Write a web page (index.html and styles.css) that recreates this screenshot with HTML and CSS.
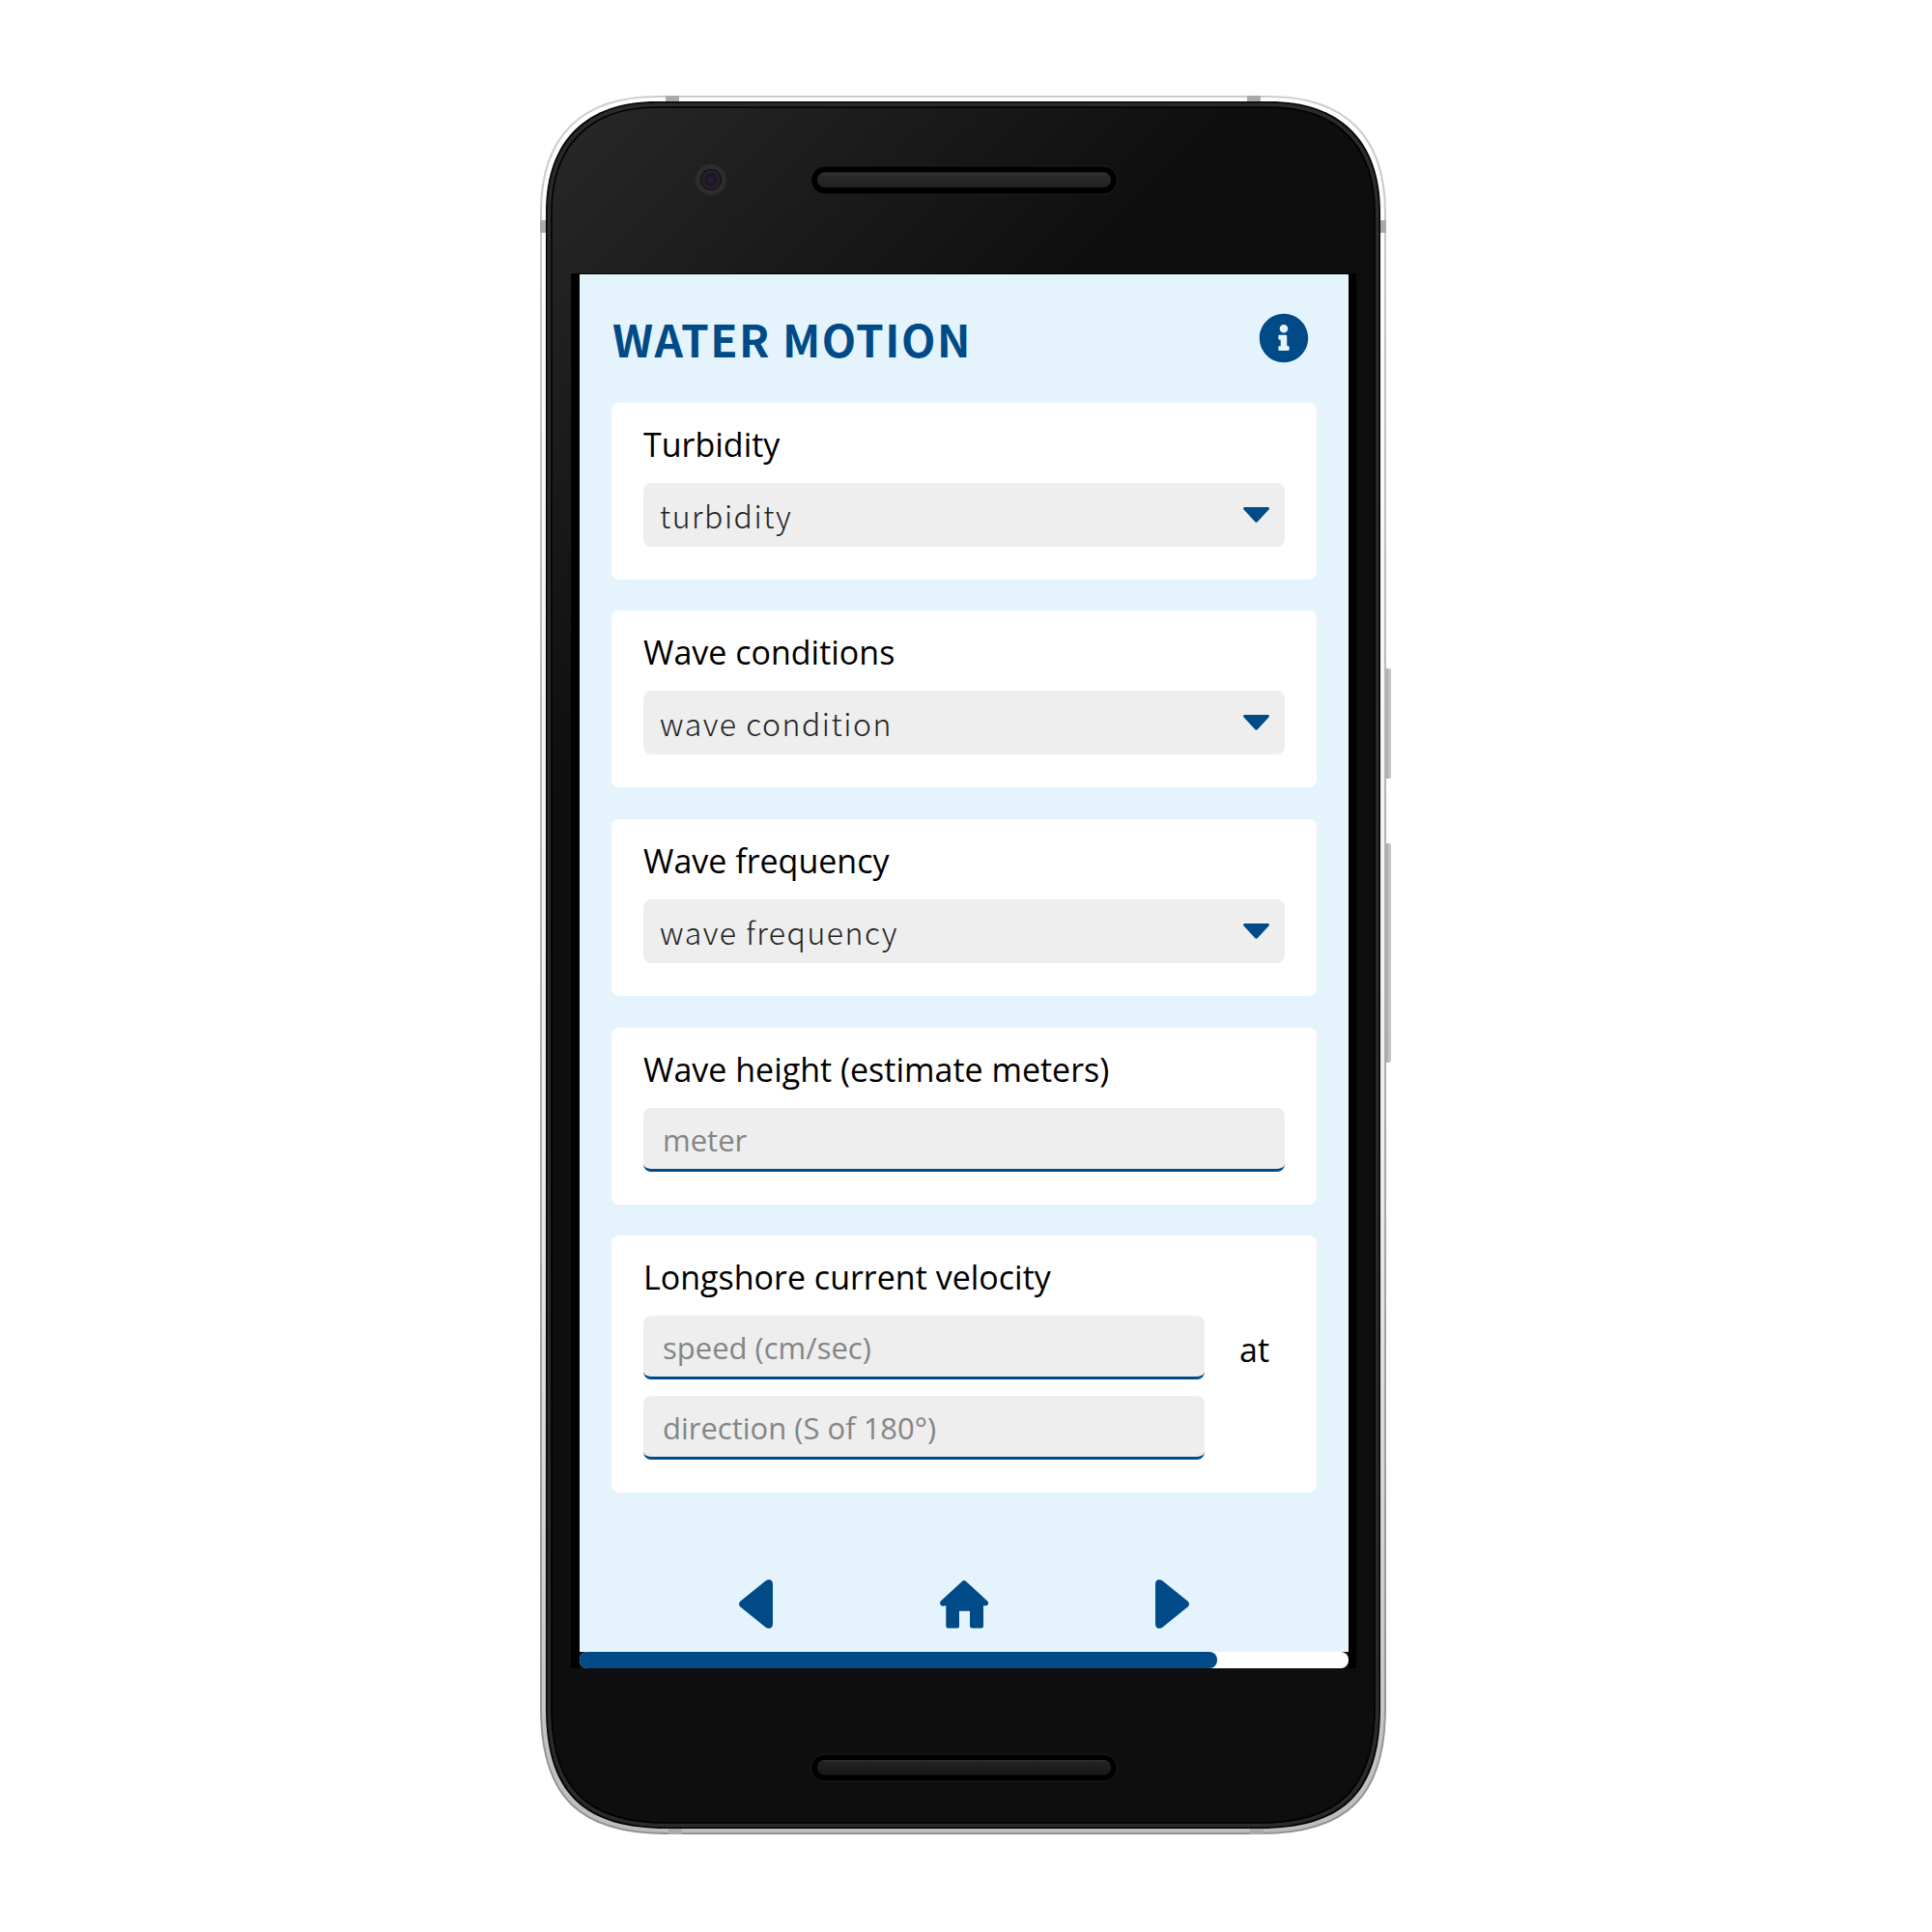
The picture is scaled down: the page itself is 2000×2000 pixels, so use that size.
FILE: index.html
```html
<!DOCTYPE html>
<html lang="en">
<head>
<meta charset="utf-8">
<title>Water Motion</title>
<link rel="stylesheet" href="styles.css">
</head>
<body>
<main class="stage">
<svg class="device" viewBox="0 0 2000 2000" aria-hidden="true">
  <defs>
    <linearGradient id="rim" x1="0" y1="0" x2="0" y2="1"><stop offset="0" stop-color="#fff"/><stop offset=".6" stop-color="#eee"/><stop offset="1" stop-color="#bdbdbd"/></linearGradient>
    <linearGradient id="edge" x1="0" y1="0" x2="0" y2="1"><stop offset="0" stop-color="#cdcdcd"/><stop offset="1" stop-color="#929292"/></linearGradient>
    <linearGradient id="glass" gradientUnits="userSpaceOnUse" x1="585" y1="130" x2="930" y2="480"><stop offset="0" stop-color="#272727"/><stop offset="1" stop-color="#0e0e0e"/></linearGradient>
    <linearGradient id="grille" x1="0" y1="0" x2="0" y2="1"><stop offset="0" stop-color="#3b3b3b"/><stop offset=".15" stop-color="#2b2b2b"/><stop offset="1" stop-color="#212121"/></linearGradient>
    <linearGradient id="grille-low" x1="0" y1="0" x2="0" y2="1"><stop offset="0" stop-color="#333"/><stop offset=".15" stop-color="#222"/><stop offset="1" stop-color="#181818"/></linearGradient>
    <linearGradient id="key" x1="0" y1="0" x2="1" y2="0"><stop offset="0" stop-color="#aaa"/><stop offset=".6" stop-color="#b0b0b0"/><stop offset=".7" stop-color="#d0d0d0"/><stop offset="1" stop-color="#bbb"/></linearGradient>
    <radialGradient id="lens"><stop offset="0" stop-color="#2b2040"/><stop offset=".45" stop-color="#1b1722"/><stop offset=".8" stop-color="#28242c"/><stop offset="1" stop-color="#0c0a10"/></radialGradient>
  </defs>
  <rect x="1433" y="692" width="7" height="114" rx="2" fill="url(#key)"/>
  <rect x="1433" y="873" width="7" height="227" rx="2" fill="url(#key)"/>
  <path d="M560 220C560 140 603 100 680 100H1314C1391 100 1434 140 1434 220V1768C1434 1860 1394 1898 1304 1898H690C600 1898 560 1860 560 1768Z" fill="url(#rim)" stroke="url(#edge)" stroke-width="2"/>
  <path d="M689 99h14v6h-14zM1291 99h14v6h-14zM692 1893h14v6h-14zM1294 1893h14v6h-14zM559 228h6v13h-6zM1429 228h6v13h-6z" fill="#aaa"/>
  <path d="M565 220C565 144 608 105 680 105H1314C1386 105 1429 144 1429 220V1768C1429 1856 1390 1893 1304 1893H690C604 1893 565 1856 565 1768Z" fill="#020202"/>
  <path d="M568.500 220C568.500 147 610 108.500 680 108.500H1314C1384 108.500 1425.500 147 1425.500 220V1768C1425.500 1853 1388 1889.500 1304 1889.500H690C606 1889.500 568.500 1853 568.500 1768Z" fill="url(#glass)" stroke="#292b2a" stroke-width="4"/>
  <path d="M571 220C571 149 612 111 680 111H1314C1382 111 1423 149 1423 220V1768C1423 1851 1386 1887 1304 1887H690C608 1887 571 1851 571 1768Z" fill="none" stroke="#000" stroke-width="1.500"/>
  <circle cx="736" cy="186" r="16" fill="#2d2d2d"/><circle cx="736" cy="186" r="11" fill="url(#lens)"/>
  <rect x="839.500" y="172" width="317" height="29" rx="14.500" fill="#000" stroke="#242424" stroke-width=".8"/>
  <rect x="846" y="178.500" width="304" height="15.500" rx="7.500" fill="url(#grille)"/>
  <rect x="839.500" y="1816" width="317" height="28" rx="14" fill="#000" stroke="#242424" stroke-width=".8"/>
  <rect x="846" y="1822" width="304" height="15.500" rx="7.500" fill="url(#grille-low)"/>
  <rect x="591" y="283" width="813" height="1444" fill="#000"/>
  <rect x="600" y="1700" width="796" height="27" fill="#0e0e0e"/>
</svg>
<section class="screen">
  <header class="header">
    <h1 class="title">WATER MOTION</h1>
    <svg class="info" viewBox="0 0 512 512"><path fill="currentColor" d="M256 8C119.043 8 8 119.083 8 256c0 136.997 111.043 248 248 248s248-111.003 248-248C504 119.083 392.957 8 256 8zm0 110c23.196 0 42 18.804 42 42s-18.804 42-42 42-42-18.804-42-42 18.804-42 42-42zm56 254c0 6.627-5.373 12-12 12h-88c-6.627 0-12-5.373-12-12v-24c0-6.627 5.373-12 12-12h12v-64h-12c-6.627 0-12-5.373-12-12v-24c0-6.627 5.373-12 12-12h64c6.627 0 12 5.373 12 12v100h12c6.627 0 12 5.373 12 12v24z"/></svg>
  </header>
  <form class="cards">
    <div class="card">
      <div class="label">Turbidity</div>
      <div class="field select"><span class="w-turbidity">turbidity</span><svg class="caret" viewBox="0 0 27 16"><path fill="currentColor" d="M1.600 0H25.400C27 0 27.400 1.500 26.400 2.600L14.900 15C14 16 13 16 12.100 15L.6 2.600C-.4 1.500 0 0 1.600 0Z"/></svg></div>
    </div>
    <div class="card">
      <div class="label">Wave conditions</div>
      <div class="field select"><span>wave condition</span><svg class="caret" viewBox="0 0 27 16"><path fill="currentColor" d="M1.600 0H25.400C27 0 27.400 1.500 26.400 2.600L14.900 15C14 16 13 16 12.100 15L.6 2.600C-.4 1.500 0 0 1.600 0Z"/></svg></div>
    </div>
    <div class="card">
      <div class="label">Wave frequency</div>
      <div class="field select"><span>wave frequency</span><svg class="caret" viewBox="0 0 27 16"><path fill="currentColor" d="M1.600 0H25.400C27 0 27.400 1.500 26.400 2.600L14.900 15C14 16 13 16 12.100 15L.6 2.600C-.4 1.500 0 0 1.600 0Z"/></svg></div>
    </div>
    <div class="card">
      <div class="label">Wave height (estimate meters)</div>
      <div class="field input">meter</div>
    </div>
    <div class="card">
      <div class="label">Longshore current velocity</div>
      <div class="row">
        <div class="field input">speed (cm/sec)</div><span class="joiner">at</span>
        <div class="field input">direction (S of 180°)</div>
      </div>
    </div>
  </form>
  <nav class="nav">
    <svg class="arrow" viewBox="0 0 35 51"><path fill="currentColor" d="M35 5V46C35 50.500 31.500 52.300 27.500 49.600L1.500 28.500C-.5 26.700-.5 24.300 1.500 22.500L27.500 1.400C31.500-1.300 35 .5 35 5Z"/></svg>
    <svg class="home" viewBox="0 0 50 50"><path fill="currentColor" d="M23 1Q25-.8 27 1L49 21.200Q51 23.300 49.300 25.500Q48.600 26.400 46.500 26.300H45V47.500Q45 49.500 43 49.500H33.500Q31 49.500 31 47.500V31.700H20V47.500Q20 49.500 18 49.500H8.500Q6.300 49.500 6.300 47.500V26.300H5Q2 27.300.8 25.500Q-.8 23.300 1 21.200Z"/></svg>
    <svg class="arrow" viewBox="0 0 35 51"><path fill="currentColor" d="M0 5V46C0 50.500 3.500 52.300 7.500 49.600L33.500 28.500C35.500 26.700 35.500 24.300 33.500 22.500L7.500 1.400C3.500-1.300 0 .5 0 5Z"/></svg>
  </nav>
  <div class="track"><div class="progress"></div></div>
</section>
</main>
</body>
</html>
```
FILE: styles.css
```css
* { box-sizing: border-box; }
body { margin: 0; background: #fff; }
.stage {
  width: 2000px;
  height: 2000px;
  display: grid;
  overflow: hidden;
}
.device, .screen { grid-area: 1 / 1; }
.device { width: 2000px; height: 2000px; display: block; }
.screen {
  margin: 284px 0 0 600px;
  width: 796px;
  height: 1443px;
  display: flex;
  flex-direction: column;
  background: linear-gradient(#e5f4fc, #e5f4fc) top / 100% 1426px no-repeat;
  color: #000;
  font-family: "Open Sans", sans-serif;
}
.header {
  height: 132.500px;
  flex: none;
  padding: 0 41px 0 34px;
  display: flex;
  align-items: center;
  justify-content: space-between;
  color: #004b87;
}
.title {
  margin: 0;
  font: 700 46px/60px "Noto Sans CJK JP", sans-serif;
  letter-spacing: 1.500px;
  white-space: nowrap;
}
.info { width: 52px; height: 52px; }
.cards {
  padding: 0 33px;
  display: flex;
  flex-direction: column;
  gap: 32.700px;
}
.card {
  padding: 20px 33px 34px;
  background: #fff;
  border-radius: 8px;
}
.label {
  height: 46px;
  margin-bottom: 17px;
  font-size: 34px;
  line-height: 46px;
  white-space: nowrap;
}
.field {
  height: 66px;
  background: #eee;
  border-radius: 8px;
  white-space: nowrap;
}
.select {
  padding: 0 16px 0 17px;
  display: flex;
  align-items: center;
  justify-content: space-between;
  font: 300 32px/66px "Noto Sans CJK JP", sans-serif;
  letter-spacing: 1.500px;
  color: #222;
}
.caret { width: 27px; height: 16px; color: #004b87; }
.input {
  padding-left: 20px;
  border-bottom: 3px solid #004b87;
  font-size: 31px;
  line-height: 66px;
  color: #858585;
}
.row {
  display: grid;
  grid-template-columns: 581px auto;
  column-gap: 36px;
  row-gap: 17px;
}
.joiner { font-size: 34px; line-height: 70px; height: 66px; }
.nav {
  margin-top: auto;
  padding: 0 165px;
  height: 51px;
  margin-bottom: 24px;
  display: flex;
  align-items: center;
  justify-content: space-between;
  color: #004b87;
}
.arrow { width: 35px; height: 51px; }
.home { width: 50px; height: 50px; }
.track { height: 17px; flex: none; background: #fff; border-radius: 8px; }
.progress { width: 660px; height: 17px; border-radius: 8px; background: #004b87; }
```
